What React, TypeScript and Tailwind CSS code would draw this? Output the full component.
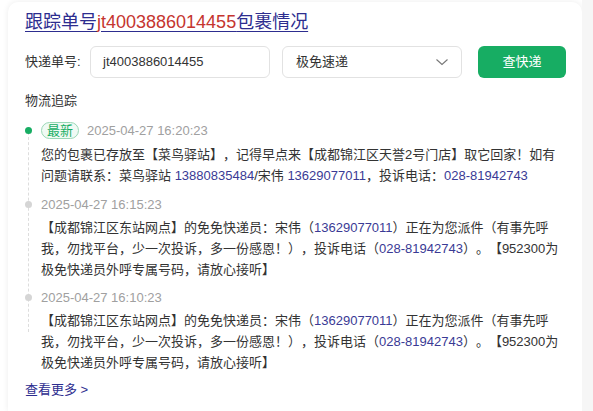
import React from "react";

const font = { fontFamily: '"Liberation Sans", "Noto Sans CJK SC", sans-serif' };

function Link({ children }: { children: React.ReactNode }) {
  return <span className="text-[#3a3a95]">{children}</span>;
}

export default function App() {
  return (
    <div className="flex h-[411px] w-[593px] overflow-hidden bg-white [text-spacing-trim:space-all]" style={font}>
      <div className="ml-[8px] mt-[2px] w-[574px] shrink-0 rounded-t-[10px] bg-white pl-[17px] pr-[16px] pt-[8px] shadow-[0_0_6px_rgba(0,0,0,0.08)]">
        <div className="text-[18px] leading-[24px] text-[#2d2d8f] underline underline-offset-[3px]">
          跟踪单号<span className="text-[#c5352f]">jt4003886014455</span>包裹情况
        </div>
        <div className="mt-[12px] flex items-center">
          <span className="w-[65px] text-[13px] text-[#333]">快递单号:</span>
          <div className="flex h-[32px] w-[180px] items-center rounded-[6px] border border-[#e2e2e2] pl-[12px] text-[13px] text-[#333]">
            jt4003886014455
          </div>
          <div className="ml-[12px] flex h-[32px] w-[180px] items-center justify-between rounded-[6px] border border-[#e2e2e2] pl-[13px] pr-[12px] text-[13px] text-[#333]">
            <span>极免速递</span>
            <svg width="14" height="14" viewBox="0 0 14 14" fill="none">
              <path d="M1.5 4.5 L7 9.5 L12.5 4.5" stroke="#777" strokeWidth="1.1" />
            </svg>
          </div>
          <button className="ml-[16px] flex h-[32px] w-[88px] items-center justify-center rounded-[6px] bg-[#17ad63] text-[13px] text-white">
            查快递
          </button>
        </div>
        <div className="mt-[13px] text-[13px] leading-[20px] text-[#333]">物流追踪</div>

        <div className="relative mt-[9px]">
          <div className="absolute left-[3px] top-[12px] h-[200px] border-l border-dashed border-[#ddd]" />

          <div className="relative flex">
            <div className="relative w-[16px] shrink-0">
              <div className="absolute left-0 top-[7px] h-[7px] w-[7px] rounded-full bg-[#17ad63]" />
            </div>
            <div className="flex-1 text-[13px] leading-[21px] text-[#333]">
              <div className="flex items-center">
                <span className="mr-[8px] flex h-[17px] items-center rounded-full border border-[#9ad8b6] bg-[#f0faf4] px-[5px] text-[13px] leading-none text-[#17ad63]">
                  最新
                </span>
                <span className="text-[#a0a0a0]">2025-04-27 16:20:23</span>
              </div>
              <div className="mt-[3px] w-[522px]">
                您的包裹已存放至【菜鸟驿站】，记得早点来【成都锦江区天誉2号门店】取它回家！如有问题请联系：菜鸟驿站 <Link>13880835484</Link>/宋伟 <Link>13629077011</Link>，投诉电话：<Link>028-81942743</Link>
              </div>
            </div>
          </div>

          {[0, 1].map((i) => (
            <div key={i} className={`relative flex ${i === 0 ? "mt-[8px]" : "mt-[7px]"}`}>
              <div className="relative w-[16px] shrink-0">
                <div className="absolute left-0 top-[7px] h-[7px] w-[7px] rounded-full bg-[#d5d5d5]" />
              </div>
              <div className="flex-1 text-[13px] leading-[21px] text-[#333]">
                <div className="text-[#a0a0a0]">{i === 0 ? "2025-04-27 16:15:23" : "2025-04-27 16:10:23"}</div>
                <div className="mt-[2px] w-[522px]">
                  【成都锦江区东站网点】的免免快递员：宋伟（<Link>13629077011</Link>）正在为您派件（有事先呼我，勿找平台，少一次投诉，多一份感恩！），投诉电话（<Link>028-81942743</Link>）。【952300为极免快递员外呼专属号码，请放心接听】
                </div>
              </div>
            </div>
          ))}
        </div>

        <div className="mt-[6px] text-[13px] leading-[21px] text-[#2d2d8f]">查看更多 &gt;</div>
      </div>
      <div className="flex-1 bg-[#f6f6f6]" />
    </div>
  );
}
